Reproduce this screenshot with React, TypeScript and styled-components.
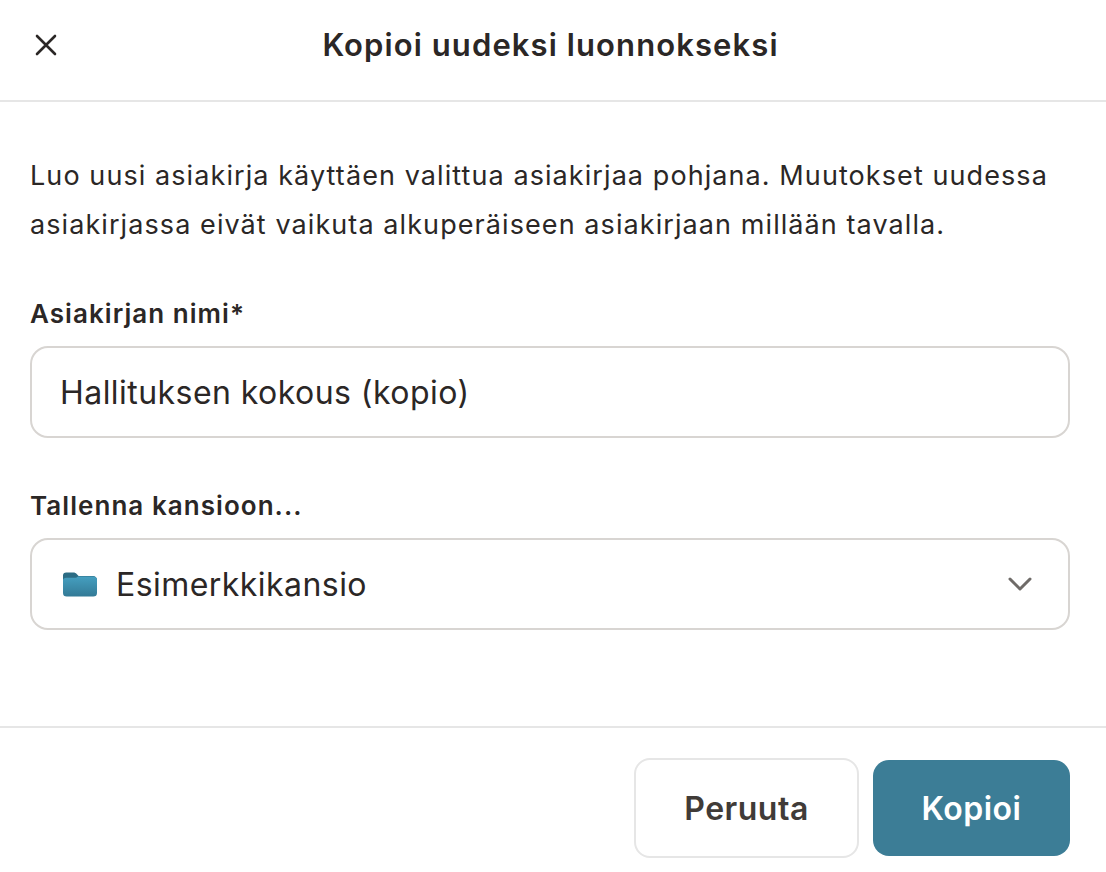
import React, { useState } from "react";
import styled, { createGlobalStyle } from "styled-components";

const GlobalStyle = createGlobalStyle`
    html, body {
        margin: 0;
        padding: 0;
        background: #ffffff;
    }
    body {
        font-family: "Inter", "Noto Sans", sans-serif;
        color: #2b2726;
    }
`;

const Dialog = styled.div`
    width: 1106px;
    height: 872px;
    display: flex;
    flex-direction: column;
    background: #ffffff;
    overflow: hidden;
`;

const Header = styled.header`
    height: 102px;
    flex-shrink: 0;
    box-sizing: border-box;
    display: grid;
    grid-template-columns: 92px 1fr 97px;
    align-items: center;
    padding-bottom: 10px;
    border-bottom: 2px solid #e6e6e6;
`;

const CloseButton = styled.button`
    width: 92px;
    height: 90px;
    display: flex;
    align-items: center;
    justify-content: center;
    padding: 0;
    border: 0;
    background: transparent;
    color: #2b2726;
`;

const Title = styled.h1`
    margin: 0;
    text-align: center;
    font-size: 31px;
    font-weight: 600;
    line-height: 90px;
    letter-spacing: 1.1px;
`;

const Body = styled.main`
    flex: 1;
    padding: 49px 36px 0 30px;
`;

const Intro = styled.p`
    margin: 0 0 49px;
    font-size: 27px;
    line-height: 49px;
    letter-spacing: 1.08px;
`;

const Field = styled.div`
    margin-bottom: 52px;
`;

const Label = styled.label`
    display: block;
    margin-bottom: 16px;
    font-size: 26px;
    font-weight: 600;
    line-height: 32px;
    letter-spacing: 1.05px;
`;

const Control = styled.div`
    height: 92px;
    box-sizing: border-box;
    display: flex;
    align-items: center;
    border: 2px solid #d8d5d2;
    border-radius: 18px;
    background: #ffffff;
`;

const TextInput = styled.input`
    flex: 1;
    min-width: 0;
    padding: 0 28px;
    border: 0;
    outline: 0;
    background: transparent;
    color: #2b2726;
    font-family: inherit;
    font-size: 32px;
    letter-spacing: 0.45px;
`;

const FolderName = styled.span`
    flex: 1;
    margin-left: 19px;
    font-size: 32px;
    letter-spacing: 0.45px;
`;

const FolderGlyph = styled.svg`
    margin-left: 31px;
    flex-shrink: 0;
`;

const Chevron = styled.svg`
    margin-right: 35px;
    flex-shrink: 0;
    color: #6f6b68;
`;

const Footer = styled.footer`
    height: 146px;
    flex-shrink: 0;
    box-sizing: border-box;
    display: flex;
    align-items: center;
    justify-content: flex-end;
    gap: 14px;
    padding: 16px 36px 0 0;
    border-top: 2px solid #e6e6e6;
`;

const Button = styled.button<{ $primary?: boolean }>`
    box-sizing: border-box;
    width: ${(p) => (p.$primary ? "197px" : "225px")};
    height: ${(p) => (p.$primary ? "96px" : "100px")};
    border: ${(p) => (p.$primary ? "0" : "2px solid #e6e6e6")};
    border-radius: 16px;
    background: ${(p) => (p.$primary ? "#3c7d96" : "#ffffff")};
    color: ${(p) => (p.$primary ? "#ffffff" : "#403b38")};
    font-family: inherit;
    font-size: 32px;
    font-weight: 600;
    letter-spacing: 0.5px;
`;

const FolderIcon = () => (
    <FolderGlyph width="34" height="25" viewBox="0 0 36 28" preserveAspectRatio="none">
        <defs>
            <linearGradient id="folderFront" x1="0" y1="0" x2="0" y2="1">
                <stop offset="0" stopColor="#459fc0" />
                <stop offset="1" stopColor="#337a96" />
            </linearGradient>
        </defs>
        <path d="M0 4a3.500 3.500 0 0 1 3.500-3.500h7.500c1.500 0 2.500.6 3.500 1.700l2 2.300h15A4 4 0 0 1 36 8.500v4H0z" fill="#2c6c84" />
        <path d="M0 9.500c0-2 1.500-3 3.500-3h9c1.500 0 2.500-.7 3.300-1.500h16.200A4 4 0 0 1 36 9v14.500a4 4 0 0 1-4 4H4a4 4 0 0 1-4-4z" fill="url(#folderFront)" />
    </FolderGlyph>
);

const App = () => {
    const [name, setName] = useState("Hallituksen kokous (kopio)");

    return (
        <Dialog>
            <GlobalStyle />
            <Header>
                <CloseButton aria-label="Sulje">
                    <svg width="24" height="24" viewBox="0 0 24 24" fill="none" stroke="currentColor" strokeWidth="2.6" strokeLinecap="round">
                        <path d="M3 3l18 18M21 3L3 21" />
                    </svg>
                </CloseButton>
                <Title>Kopioi uudeksi luonnokseksi</Title>
            </Header>
            <Body>
                <Intro>
                    Luo uusi asiakirja käyttäen valittua asiakirjaa pohjana. Muutokset uudessa
                    <br />
                    asiakirjassa eivät vaikuta alkuperäiseen asiakirjaan millään tavalla.
                </Intro>
                <Field>
                    <Label>Asiakirjan nimi*</Label>
                    <Control>
                        <TextInput value={name} onChange={(e) => setName(e.target.value)} />
                    </Control>
                </Field>
                <Field>
                    <Label>Tallenna kansioon...</Label>
                    <Control>
                        <FolderIcon />
                        <FolderName>Esimerkkikansio</FolderName>
                        <Chevron width="26" height="16" viewBox="0 0 26 16" fill="none" stroke="currentColor" strokeWidth="3" strokeLinecap="round" strokeLinejoin="round">
                            <path d="M3 3l10 10L23 3" />
                        </Chevron>
                    </Control>
                </Field>
            </Body>
            <Footer>
                <Button>Peruuta</Button>
                <Button $primary>Kopioi</Button>
            </Footer>
        </Dialog>
    );
};

export default App;
